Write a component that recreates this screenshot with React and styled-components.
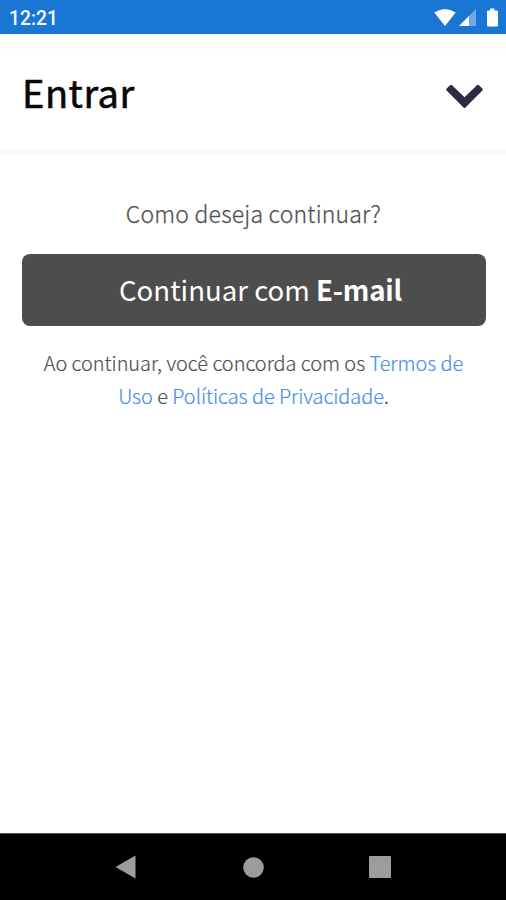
import React from 'react'
import styled, { createGlobalStyle } from 'styled-components';

const GlobalStyle = createGlobalStyle`
  * {
    box-sizing: border-box;
  }

  body {
    margin: 0;
    background: #ffffff;
    font-family: "Noto Sans CJK JP", "Noto Sans", sans-serif;
  }
`;

const Screen = styled.div`
  display: flex;
  flex-direction: column;
  width: 100%;
  height: 100vh;
  background: #ffffff;
`;

const StatusBar = styled.div`
  display: flex;
  align-items: center;
  justify-content: space-between;
  flex: none;
  height: 34px;
  padding: 1px 8px 0 9px;
  background: #1976d2;
`;

const Clock = styled.span`
  font-family: Roboto, sans-serif;
  font-size: 19.3px;
  font-weight: 500;
  line-height: 34px;
  padding-top: 2px;
  color: #f4f9ff;
`;

const Header = styled.header`
  display: flex;
  align-items: center;
  justify-content: space-between;
  flex: none;
  height: 120px;
  padding: 0 22px;
  border-bottom: 4px solid #f7f7f7;

  svg {
    margin-top: 9px;
  }
`;

const Title = styled.h1`
  margin: 0;
  padding-bottom: 1px;
  font-size: 38px;
  font-weight: 400;
  line-height: 54px;
  letter-spacing: 0.5px;
  color: #080808;
  -webkit-text-stroke: 0.6px #080808;
`;

const Content = styled.main`
  display: flex;
  flex-direction: column;
  flex: 1;
  padding: 42px 20.5px 0 21.5px;
`;

const Question = styled.p`
  margin: 0;
  font-size: 23px;
  font-weight: 300;
  line-height: 34px;
  letter-spacing: 0.2px;
  text-align: center;
  color: #505050;
  -webkit-text-stroke: 0.25px #505050;
`;

const EmailButton = styled.button`
  flex: none;
  height: 72px;
  margin: 24px 0 0;
  padding: 0 0 2px 14px;
  border: 0;
  border-radius: 8px;
  background: #4d4d4d;
  color: #ffffff;
  font-family: inherit;
  font-size: 27.6px;
  font-weight: 400;
  line-height: 40px;

  strong {
    font-weight: 700;
    letter-spacing: -0.2px;
  }
`;

const Terms = styled.p`
  margin: 21px 0 0;
  font-size: 19.9px;
  font-weight: 300;
  line-height: 32.5px;
  letter-spacing: -0.03px;
  text-align: center;
  color: #505050;
  -webkit-text-stroke: 0.2px currentColor;
`;

const TermsLink = styled.a`
  color: #4a8fe8;
`;

const NavBar = styled.nav`
  display: flex;
  align-items: center;
  justify-content: space-between;
  flex: none;
  height: 67px;
  padding: 0 115px;
  border-top: 1px solid #555555;
  background: #000000;
`;

const StatusIcons = () => (
  <svg width="64" height="20" viewBox="0 0 64 20">
    <path d="M0.300 4.500Q11 -2.500 21.700 4.500L11 18Z" fill="#fff" />
    <path d="M42 1V18H25Z" fill="#fff" opacity="0.38" />
    <path d="M35 8V18H25Z" fill="#fff" />
    <path d="M56 0.500H60.500V2.500H63Q64 2.500 64 3.500V17.500Q64 18.500 63 18.500H54Q53 18.500 53 17.500V3.500Q53 2.500 54 2.500H56Z" fill="#fff" />
  </svg>
);

const ChevronDown = () => (
  <svg width="39" height="26" viewBox="0 0 39 26">
    <path
      d="M3.700 2.600L5.100 1.200Q6.100 0.300 7.100 1.200L19.500 13.300L31.900 1.200Q32.900 0.300 33.900 1.200L37.400 4.500Q38.400 5.500 37.400 6.500L20.500 23.500Q19.500 24.500 18.500 23.500L1.600 6.500Q0.600 5.500 1.600 4.500Z"
      fill="#2c2d42"
    />
  </svg>
);

const App = () => {
  return (
    <>
      <GlobalStyle />
      <Screen>
        <StatusBar>
          <Clock>12:21</Clock>
          <StatusIcons />
        </StatusBar>
        <Header>
          <Title>Entrar</Title>
          <ChevronDown />
        </Header>
        <Content>
          <Question>Como deseja continuar?</Question>
          <EmailButton type="button">
            Continuar com <strong>E-mail</strong>
          </EmailButton>
          <Terms>
            Ao continuar, você concorda com os <TermsLink>Termos de</TermsLink>
            <br />
            <TermsLink>Uso</TermsLink> e <TermsLink>Políticas de Privacidade</TermsLink>.
          </Terms>
        </Content>
        <NavBar>
          <svg width="21" height="24" viewBox="0 0 21 24">
            <path d="M20.500 0.500V23.500L0.500 12Z" fill="#9c9c9c" />
          </svg>
          <svg width="22" height="21" viewBox="0 0 22 21">
            <circle cx="11.500" cy="10.500" r="10.300" fill="#9c9c9c" />
          </svg>
          <svg width="22" height="22" viewBox="0 0 22 22">
            <rect width="22" height="22" rx="1" fill="#9c9c9c" />
          </svg>
        </NavBar>
      </Screen>
    </>
  )
}

export default App
